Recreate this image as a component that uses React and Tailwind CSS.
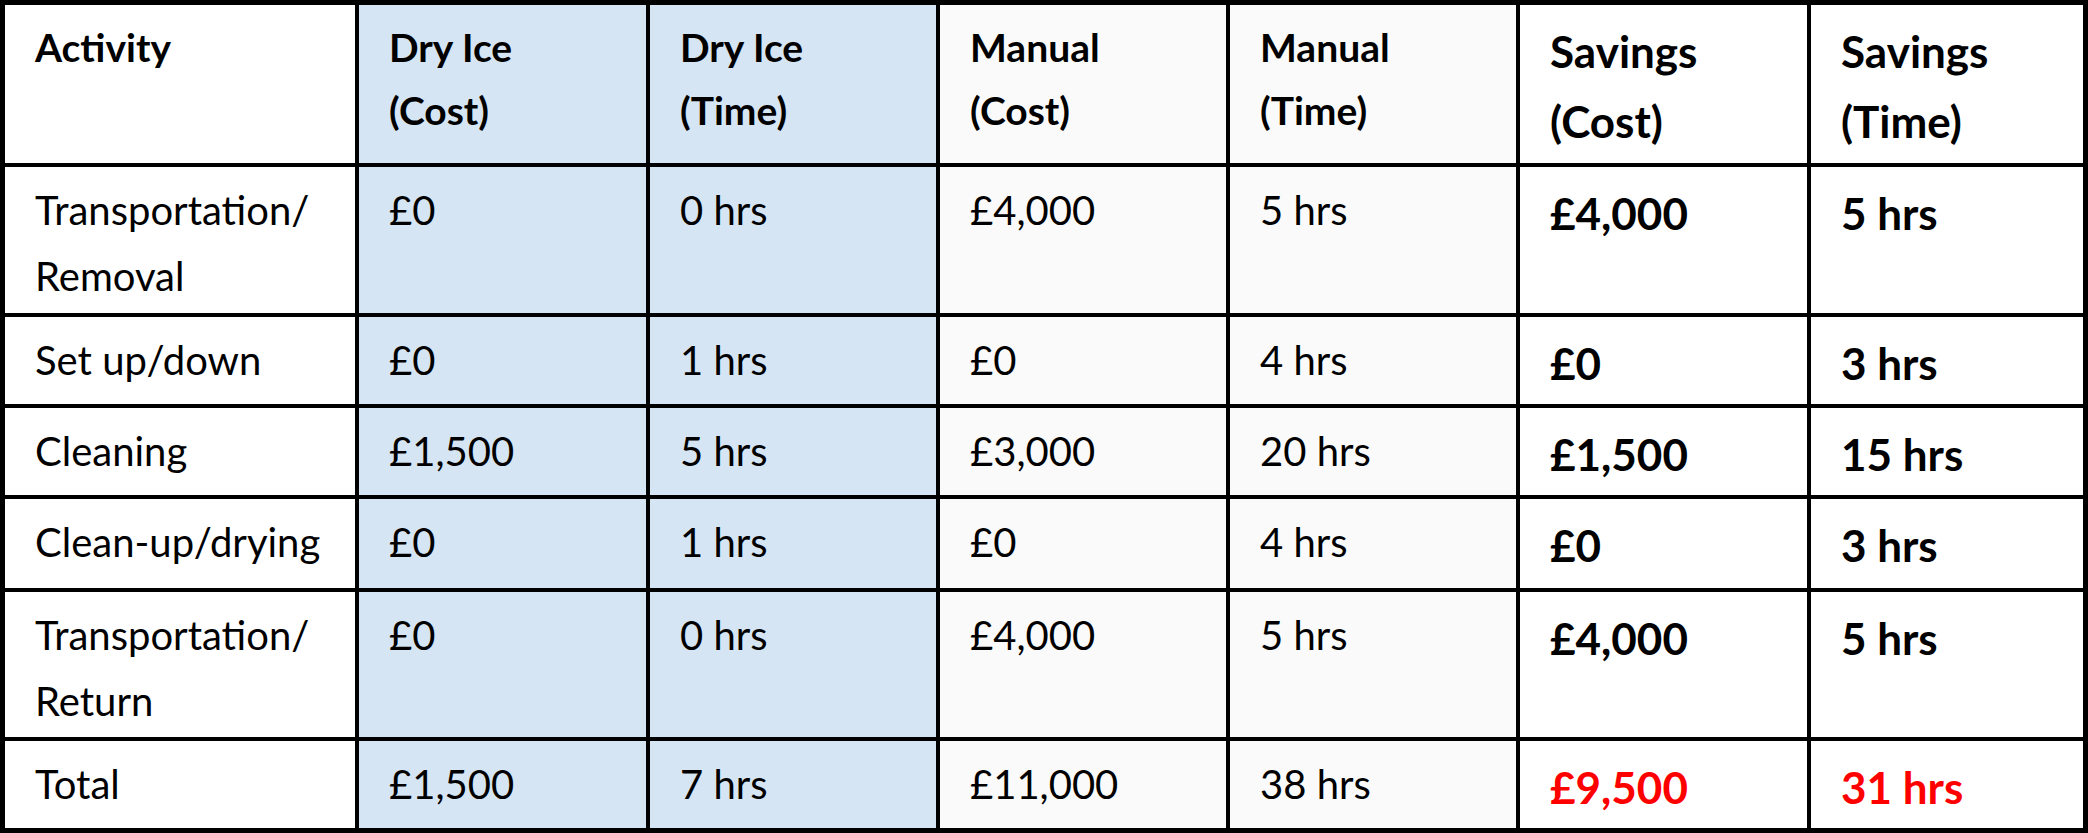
import React from 'react'

const rows = [
  { activity: ['Transportation/', 'Removal'], dc: '£0', dt: '0 hrs', mc: '£4,000', mt: '5 hrs', sc: '£4,000', st: '5 hrs' },
  { activity: ['Set up/down'], dc: '£0', dt: '1 hrs', mc: '£0', mt: '4 hrs', sc: '£0', st: '3 hrs' },
  { activity: ['Cleaning'], dc: '£1,500', dt: '5 hrs', mc: '£3,000', mt: '20 hrs', sc: '£1,500', st: '15 hrs' },
  { activity: ['Clean-up/drying'], dc: '£0', dt: '1 hrs', mc: '£0', mt: '4 hrs', sc: '£0', st: '3 hrs' },
  { activity: ['Transportation/', 'Return'], dc: '£0', dt: '0 hrs', mc: '£4,000', mt: '5 hrs', sc: '£4,000', st: '5 hrs' },
  { activity: ['Total'], dc: '£1,500', dt: '7 hrs', mc: '£11,000', mt: '38 hrs', sc: '£9,500', st: '31 hrs', total: true },
]

const headers = [
  { lines: ['Activity'], bg: 'bg-white' },
  { lines: ['Dry Ice', '(Cost)'], bg: 'bg-[#d5e5f3]' },
  { lines: ['Dry Ice', '(Time)'], bg: 'bg-[#d5e5f3]' },
  { lines: ['Manual', '(Cost)'], bg: 'bg-[#fafafa]' },
  { lines: ['Manual', '(Time)'], bg: 'bg-[#fafafa]' },
]

function Cell({ bg, children }) {
  return (
    <div className={`${bg} pl-[30px] pt-[10px] text-[40px] leading-[66px] text-black`}>
      {children}
    </div>
  )
}

function SavingsCell({ red, children }) {
  return (
    <div className={`bg-white pl-[30px] pt-[11px] text-[44px] leading-[70px] font-bold ${red ? 'text-[#ff0000]' : 'text-black'}`}>
      {children}
    </div>
  )
}

export default function App() {
  return (
    <div
      className="w-[2088px] h-[833px] bg-white"
      style={{ fontFamily: 'Lato, "Open Sans", sans-serif' }}
    >
      <div className="grid grid-cols-[350px_287px_286px_286px_286px_287px_272px] grid-rows-[158px_146px_87px_87px_89px_145px_87px] gap-[4px] bg-black p-[5px]">
        {/* Header */}
        {headers.map((h, i) => (
          <div key={i} className={`${h.bg} pl-[30px] pt-[11px] text-[39px] leading-[63px] font-bold text-black`}>
            {h.lines.map((l) => (
              <div key={l}>{l}</div>
            ))}
          </div>
        ))}
        <div className="bg-white pl-[30px] pt-[11px] text-[44px] leading-[70px] font-bold text-black">
          <div>Savings</div>
          <div>(Cost)</div>
        </div>
        <div className="bg-white pl-[30px] pt-[11px] text-[44px] leading-[70px] font-bold text-black">
          <div>Savings</div>
          <div>(Time)</div>
        </div>

        {/* Body */}
        {rows.map((r, i) => (
          <React.Fragment key={i}>
            <Cell bg="bg-white">
              {r.activity.map((a) => (
                <div key={a}>{a}</div>
              ))}
            </Cell>
            <Cell bg="bg-[#d5e5f3]">{r.dc}</Cell>
            <Cell bg="bg-[#d5e5f3]">{r.dt}</Cell>
            <Cell bg="bg-[#fafafa]">{r.mc}</Cell>
            <Cell bg="bg-[#fafafa]">{r.mt}</Cell>
            <SavingsCell red={r.total}>{r.sc}</SavingsCell>
            <SavingsCell red={r.total}>{r.st}</SavingsCell>
          </React.Fragment>
        ))}
      </div>
    </div>
  )
}
